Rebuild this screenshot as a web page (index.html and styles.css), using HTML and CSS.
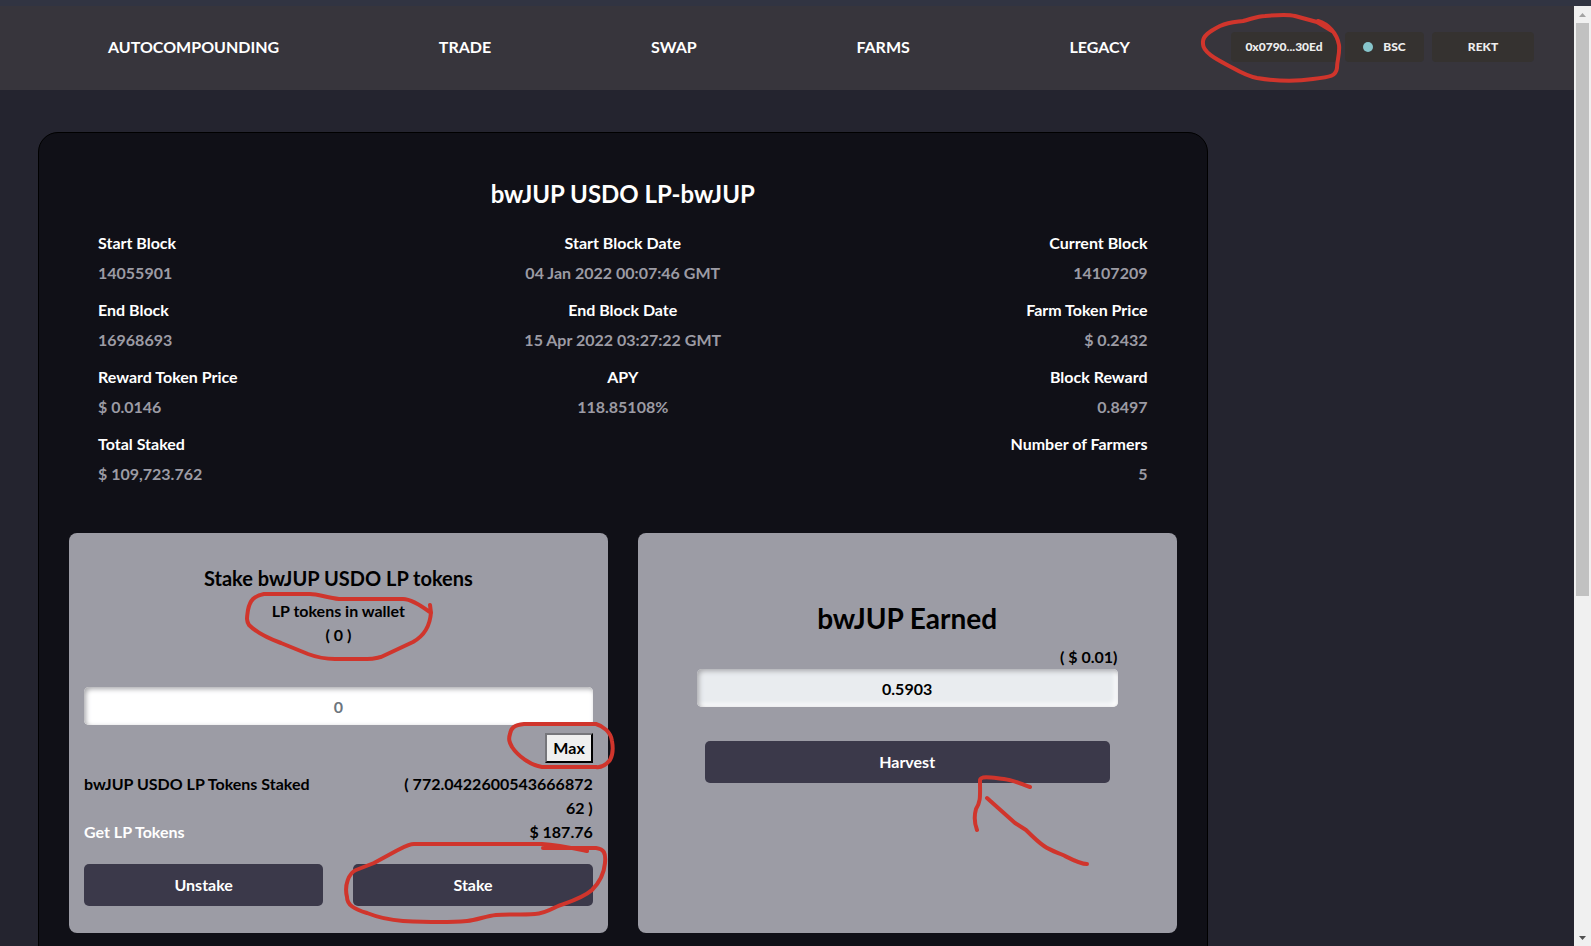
FILE: index.html
```html
<!DOCTYPE html>
<html lang="en">
<head>
<meta charset="utf-8">
<title>bwJUP USDO LP-bwJUP</title>
<link rel="stylesheet" href="styles.css">
</head>
<body>
<div class="window-edge"></div>
<div class="viewport">
  <div class="page">
    <header class="header">
      <nav class="nav">
        <a href="#">AUTOCOMPOUNDING</a>
        <a href="#">TRADE</a>
        <a href="#">SWAP</a>
        <a href="#">FARMS</a>
        <a href="#">LEGACY</a>
      </nav>
      <div class="wallet">
        <button class="chip chip-address" type="button">0x0790...30Ed</button>
        <button class="chip chip-chain" type="button"><span class="dot"></span>BSC</button>
        <button class="chip chip-rekt" type="button">REKT</button>
      </div>
    </header>
    <main class="panel">
      <h1 class="title">bwJUP USDO LP-bwJUP</h1>
      <dl class="stats">
        <div class="stat"><dt>Start Block</dt><dd>14055901</dd></div>
        <div class="stat"><dt>Start Block Date</dt><dd>04 Jan 2022 00:07:46 GMT</dd></div>
        <div class="stat"><dt>Current Block</dt><dd>14107209</dd></div>
        <div class="stat"><dt>End Block</dt><dd>16968693</dd></div>
        <div class="stat"><dt>End Block Date</dt><dd>15 Apr 2022 03:27:22 GMT</dd></div>
        <div class="stat"><dt>Farm Token Price</dt><dd>$ 0.2432</dd></div>
        <div class="stat"><dt>Reward Token Price</dt><dd>$ 0.0146</dd></div>
        <div class="stat"><dt>APY</dt><dd>118.85108%</dd></div>
        <div class="stat"><dt>Block Reward</dt><dd>0.8497</dd></div>
        <div class="stat"><dt>Total Staked</dt><dd>$ 109,723.762</dd></div>
        <div class="stat stat-last"><dt>Number of Farmers</dt><dd>5</dd></div>
      </dl>
      <div class="cards">
        <section class="card stake">
          <h2 class="stake-title">Stake bwJUP USDO LP tokens</h2>
          <label class="wallet-balance" for="amount">LP tokens in wallet<br>( 0 )</label>
          <input class="field" id="amount" type="text" placeholder="0">
          <button class="max" type="button">Max</button>
          <div class="staked">
            <span>bwJUP USDO LP Tokens Staked</span>
            <span class="staked-amount">( 772.0422600543666872<br>62 )</span>
          </div>
          <div class="staked">
            <a class="get" href="#">Get LP Tokens</a>
            <span>$ 187.76</span>
          </div>
          <div class="actions">
            <button class="action" type="button">Unstake</button>
            <button class="action" type="button">Stake</button>
          </div>
        </section>
        <section class="card earned">
          <h2 class="earned-title">bwJUP Earned</h2>
          <label class="earned-value" for="earned">( $ 0.01)</label>
          <input class="field field-readonly" id="earned" type="text" value="0.5903" readonly>
          <button class="action harvest" type="button">Harvest</button>
        </section>
      </div>
    </main>
  </div>
  <div class="scrollbar" aria-hidden="true">
    <svg class="arrow" viewBox="0 0 17 17"><path d="M5 11L8.500 7L12 11Z" fill="#a3a3a3"/></svg>
    <div class="thumb"></div>
    <svg class="arrow" viewBox="0 0 17 17"><path d="M5 7L8.500 11L12 7Z" fill="#505050"/></svg>
  </div>
</div>
<svg class="marks" viewBox="0 0 1591 946" aria-hidden="true">
  <path d="M1318 21C1328 24 1337 33 1339 45C1340 54 1337 60 1337 68C1336 76 1331 77 1313 79C1294 82 1275 81 1257 78C1247 76 1240 72 1233 68C1220 61 1202 53 1203 43C1202 36 1210 31 1220 26C1229 22 1236 22 1243 21C1254 18 1259 16 1265 16C1275 15 1288 14 1295 16L1317 22L1332 31"/>
  <path d="M430 605L431 613C423 607 412 599 403 599H339C328 598 318 594 310 594H264C254 596 250 600 248 610C247 617 246 620 249 625C258 634 270 639 281 643L308 654C316 657 325 659 335 659H367C374 659 376 658 381 657L413 642C422 637 430 628 431 612"/>
  <path d="M596 724H524C514 725 511 728 510 734C508 740 510 743 512 747C518 756 530 765 542 767H596C602 768 606 765 610 760C613 755 613 747 612 741C611 732 603 726 596 724Z"/>
  <path d="M543 848H596C604 849 606 853 605 863C604 874 600 882 592 890C583 898 569 902 556 907C548 911 541 914 535 914C520 915 508 914 496 915C486 916 477 920 467 921C446 923 422 922 403 921C389 920 377 917 367 913C354 909 347 905 347 897C344 885 349 873 356 870L374 863L396 851C404 847 409 844 414 844L542 844C558 845 572 848 587 851"/>
  <path d="M977 830C974 822 974 816 976 809C981 801 980 796 980 780C981 775 994 778 1004 779C1014 780 1021 784 1030 787M987 798L1015 823L1026 830C1034 838 1038 842 1044 846C1051 851 1059 853 1063 855C1071 859 1080 864 1087 864"/>
</svg>
</body>
</html>
```
FILE: styles.css
```css
* { box-sizing: border-box; }

body {
  margin: 0;
  height: 100vh;
  display: flex;
  flex-direction: column;
  overflow: hidden;
  background: #24242f;
  color: #000;
  font: 700 16px/24px Lato, "Open Sans", sans-serif;
}

h1, h2, dl, dd { margin: 0; }
button, input { font: inherit; }
button { cursor: pointer; }
a { color: #fff; text-decoration: none; }

.window-edge { flex: none; height: 6px; background: #313442; }

.viewport { flex: 1; min-height: 0; display: flex; }

.page { flex: 1; min-width: 0; overflow: hidden; }

.header {
  height: 84px;
  display: flex;
  align-items: center;
  justify-content: space-between;
  padding: 0 40px 2px 108px;
  background: #37353c;
}

.nav { flex: 1; display: flex; justify-content: space-between; }

.wallet { display: flex; gap: 8px; margin-left: 101px; }

.chip {
  height: 30px;
  display: flex;
  align-items: center;
  justify-content: center;
  padding: 0;
  border: 0;
  border-radius: 4px;
  background: #353230;
  color: #eee;
  font-size: 12px;
  font-weight: 900;
}
.chip-address { width: 106px; }
.chip-chain { width: 79px; gap: 10px; }
.chip-rekt { width: 102px; }
.dot { width: 10px; height: 10px; border-radius: 50%; background: #87c5cb; }

.panel {
  width: calc(75% - 11px);
  height: 100%;
  margin: 42px 0 0 38px;
  padding: 47px 30px 0;
  border: 1px solid #000;
  border-radius: 20px;
  background: #101017;
}

.title {
  color: #fff;
  font-size: 24px;
  line-height: 28px;
  text-align: center;
}

.stats {
  display: grid;
  grid-template-columns: repeat(3, 1fr);
  row-gap: 13px;
  margin-top: 23px;
  padding: 0 29px;
  color: #9c9ba4;
}
.stat { display: grid; row-gap: 6px; text-align: center; }
.stat:nth-child(3n+1) { text-align: left; }
.stat:nth-child(3n) { text-align: right; }
.stat-last { grid-column: 3; text-align: right; }
.stat dt { color: #fff; }

.cards {
  display: grid;
  grid-template-columns: 1fr 1fr;
  gap: 30px;
  margin-top: 47px;
}

.card {
  height: 400px;
  display: flex;
  flex-direction: column;
  border-radius: 8px;
  background: #9c9ca5;
}

.stake { padding: 33px 15px 27px; }
.stake-title { font-size: 20px; line-height: 24px; text-align: center; }
.wallet-balance { margin-top: 9px; text-align: center; }

.field {
  width: 100%;
  height: 38px;
  padding: 0 12px;
  border: 0;
  border-radius: 5px;
  background: #fff;
  color: #000;
  text-align: center;
  box-shadow: inset 2px 2px 5px #a9a9ad, inset -3px -3px 5px #fff;
}
.field::placeholder { color: #6c757d; opacity: 1; }
.stake .field { margin-top: 40px; }
.field-readonly { background: #e9ecef; }

.max {
  align-self: flex-end;
  margin: 8px 0 9px;
  padding: 1px 6px;
  border: 2px outset #2a2a30;
  border-color: #76767b #26262b #26262b #76767b;
  background: #efefef;
  color: #000;
}

.staked { display: flex; justify-content: space-between; }
.staked-amount { text-align: right; }
.get { color: #fff; }

.actions {
  display: grid;
  grid-template-columns: 1fr 1fr;
  gap: 30px;
  margin-top: auto;
}
.action {
  height: 42px;
  border: 0;
  border-radius: 5px;
  background: #3b394a;
  color: #fff;
}

.earned { padding: 68px 59px 0; }
.earned-title { font-size: 28px; line-height: 34px; text-align: center; font-weight: 700; }
.earned-value { margin-top: 10px; text-align: right; }
.harvest { margin: 34px 8px 0; }

.scrollbar {
  flex: none;
  width: 17px;
  display: flex;
  flex-direction: column;
  background: #f0f0f0;
}
.arrow { flex: none; display: block; height: 17px; }
.thumb { height: 61%; margin: 0 2px; background: #c1c1c1; }
.arrow:last-child { margin-top: auto; }

.marks {
  position: absolute;
  inset: 0;
  width: 100%;
  height: 100%;
  fill: none;
  stroke: #d0352c;
  stroke-width: 4;
  stroke-linecap: round;
  stroke-linejoin: round;
  pointer-events: none;
}
```
